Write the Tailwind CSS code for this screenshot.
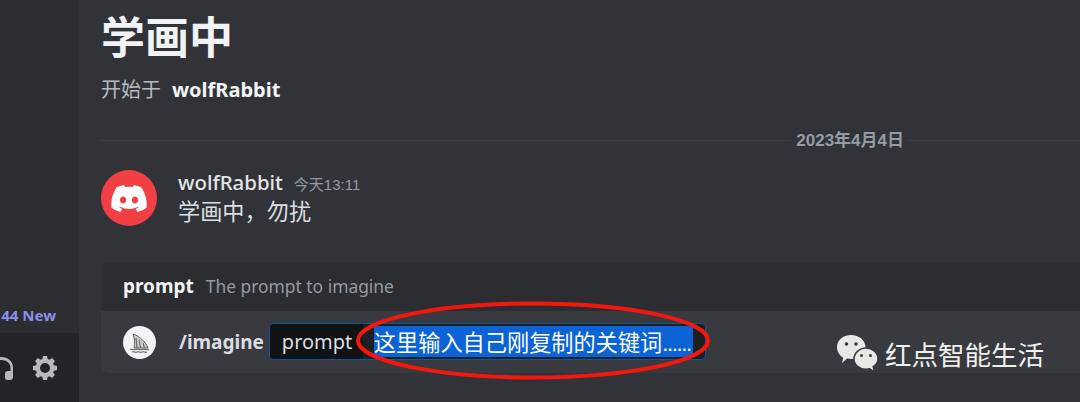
<!doctype html>
<html><head><meta charset="utf-8"><script src="https://cdn.jsdelivr.net/npm/@tailwindcss/browser@4"></script></head>
<body class="m-0 overflow-hidden">
<div class="relative w-[1080px] h-[402px] flex overflow-hidden bg-[#313338] font-['Noto_Sans','Noto_Sans_CJK_SC',sans-serif]">
  <aside class="w-[79px] h-full shrink-0 flex flex-col bg-[#2b2d31]">
    <div class="flex-1 flex flex-col justify-end items-end pr-[23px] pb-[9px]">
      <span class="text-[15px] leading-[18px] font-bold text-[#8c8fe8]">44 New</span>
    </div>
    <div class="h-[69px] bg-[#232428] flex items-start pt-[23px] gap-[19px]">
      <svg class="w-[14px] h-[26px] shrink-0" viewBox="0 0 14 26"><path d="M0 1h1c7 0 12 4 12 11v9a3 3 0 0 1-3 3H7.500a2.500 2.500 0 0 1-2.500-2.500V18a3 3 0 0 1 3-3h2.500v-3C10.500 7 7 4 1 4H0z" fill="#b5bac1"/></svg>
      <svg class="w-[24px] h-[24px] shrink-0" viewBox="0 0 24 24"><path fill="#b5bac1" fill-rule="evenodd" d="M10 0h4l.7 3.100 1.700.7 2.700-1.700 2.800 2.800-1.700 2.700.7 1.700L24 10v4l-3.100.7-.7 1.700 1.700 2.700-2.800 2.800-2.700-1.700-1.700.7L14 24h-4l-.7-3.100-1.700-.7-2.700 1.700-2.800-2.800 1.700-2.700-.7-1.700L0 14v-4l3.100-.7.7-1.700L2.100 4.900l2.800-2.800 2.700 1.700 1.700-.7zM12 7a5 5 0 1 0 0 10 5 5 0 0 0 0-10z"/></svg>
    </div>
  </aside>
  <main class="flex-1 min-w-0 flex flex-col pl-[22px]">
    <h1 class="mt-[9px] text-[44px] leading-[52px] font-bold text-[#f2f3f5] font-['Noto_Sans_CJK_SC',sans-serif]">学画中</h1>
    <p class="mt-[15px] text-[20px] leading-[26px] text-[#b5bac1] font-['Noto_Sans_CJK_SC',sans-serif]">开始于<span class="ml-[11px] font-bold text-[#f2f3f5] font-['Noto_Sans',sans-serif] text-[20px]">wolfRabbit</span></p>
    <div class="mt-[23px] flex items-center h-[28px]">
      <div class="flex-1 h-px bg-[#3f4147]"></div>
      <span class="px-[5px] mt-px text-[17px] font-bold text-[#949ba4] font-['Liberation_Sans','Noto_Sans_CJK_SC',sans-serif]">2023年4月4日</span>
      <div class="w-[171px] h-px bg-[#3f4147]"></div>
    </div>
    <div class="mt-[16px] flex gap-[21px]">
      <div class="w-[56px] h-[56px] rounded-full bg-[#f23f43] flex items-center justify-center shrink-0">
        <svg class="w-[36px] h-[27px]" viewBox="0 0 34 26"><path fill="#fff" fill-rule="evenodd" d="M28.800 2.200A28 28 0 0 0 21.700 0l-.9 1.900a26 26 0 0 0-7.700 0L12.200 0a28 28 0 0 0-7.100 2.200C.6 8.900-.6 15.400 0 21.800A28 28 0 0 0 8.700 26l1.800-3a18 18 0 0 1-2.800-1.300l.7-.5a20 20 0 0 0 17.100 0l.7.5A18 18 0 0 1 23.400 23l1.800 3a28 28 0 0 0 8.700-4.200c.7-7.400-1.200-13.900-5.100-19.600zM11.300 17.900c-1.700 0-3-1.500-3-3.400s1.300-3.400 3-3.400 3.100 1.600 3 3.400c0 1.900-1.300 3.400-3 3.400zm11.400 0c-1.700 0-3-1.500-3-3.400s1.300-3.400 3-3.400 3.100 1.600 3 3.400c0 1.900-1.300 3.400-3 3.400z"/></svg>
      </div>
      <div class="flex flex-col">
        <div class="flex items-baseline gap-[11px] h-[26px] -mt-px">
          <span class="text-[20.400px] leading-[26px] font-medium text-[#e3e5e8]">wolfRabbit</span>
          <span class="text-[15px] leading-[26px] text-[#949ba4] font-['Liberation_Sans','Noto_Sans_CJK_SC',sans-serif]">今天13:11</span>
        </div>
        <p class="text-[22.200px] leading-[30px] text-[#dbdee1] font-['Noto_Sans_CJK_SC',sans-serif]">学画中，勿扰</p>
      </div>
    </div>
    <section class="mt-[36px] flex flex-col rounded-l-[8px] overflow-hidden">
      <div class="h-[49px] bg-[#2b2d31] flex items-center pl-[22px] gap-[12px]">
        <span class="text-[19px] font-bold text-[#f2f3f5]">prompt</span>
        <span class="text-[17.400px] text-[#949ba4]">The prompt to imagine</span>
      </div>
      <div class="h-[62px] bg-[#383a40] flex items-center pl-[22px]">
        <div class="w-[33px] h-[33px] rounded-full bg-[#f2f3f5] shrink-0">
          <svg class="w-[33px] h-[33px]" viewBox="0 0 33 33" fill="none" stroke="#5c5f63" stroke-width="1"><path d="M10 8c6 2 12 7 15 14H11c1.200-5 .6-9.500-1-14z" fill="#c9cbcd"/><path d="M13 12l1 10M16 14l1.500 8M20 17l1.500 5"/><path d="M7 23.500c2-1 4 1 6 0s4 1 6 0 4 1 7 0M9 26c2-1 3 1 5 0s3 1 5 0 3 1 5 0" stroke-width="1.200"/></svg>
        </div>
        <span class="ml-[23px] text-[19px] font-bold text-[#dbdee1]">/imagine</span>
        <div class="ml-[5px] w-[437px] h-[37px] mt-[-1px] rounded-[5px] border border-[#0b5a9c] bg-[#1e1f22] flex items-center overflow-hidden">
          <span class="w-[93px] h-full bg-[#111214] flex items-center pl-[12px] text-[20px] text-[#dbdee1] shrink-0">prompt</span>
          <span class="ml-[11px] w-[319px] h-[31px] bg-[#0b63d6] text-[22.200px] leading-[31px] text-white whitespace-nowrap font-['Noto_Sans_CJK_SC',sans-serif] shrink-0">这里输入自己刚复制的关键词<span class="font-['Liberation_Sans'] tracking-[-1.400px]">......</span></span>
        </div>
      </div>
    </section>
  </main>
  <svg class="absolute left-[355px] top-[300px] w-[356px] h-[81px] pointer-events-none" viewBox="0 0 356 81" fill="none"><ellipse cx="178" cy="40.500" rx="175" ry="37" stroke="#f5170e" stroke-width="4"/></svg>
  <div class="absolute left-[837px] top-[335px] flex items-center gap-[7px]">
    <svg class="w-[41px] h-[38px]" viewBox="0 0 41 38">
      <path fill="#e8e8e6" d="M14 0c8 0 14 5 14.500 11.500 0 6-6 12.500-14.500 12.500-1.500 0-2.800-.2-4-.5L5 28l1.200-5.200C2.500 20.500 0 16.500 0 12 0 5.400 6 0 14 0z"/>
      <circle cx="9.500" cy="9" r="1.800" fill="#3a3c42"/><circle cx="19" cy="9" r="1.800" fill="#3a3c42"/>
      <path fill="#e8e8e6" stroke="#393b41" stroke-width="1.500" d="M29 13c6.600 0 12 4.700 12 10.500 0 3.400-1.800 6.300-4.800 8.200L37.500 37l-4.700-3.200c-1.200.3-2.500.5-3.800.5-6.600 0-12-4.600-12-10.300S22.400 13 29 13z"/>
      <circle cx="24.500" cy="20.500" r="1.500" fill="#3a3c42"/><circle cx="33.500" cy="20.500" r="1.500" fill="#3a3c42"/>
    </svg>
    <span class="text-[26.500px] leading-[38px] text-[#f0f0ee] font-['Noto_Sans_CJK_SC',sans-serif] whitespace-nowrap">红点智能生活</span>
  </div>
</div>
</body></html>
